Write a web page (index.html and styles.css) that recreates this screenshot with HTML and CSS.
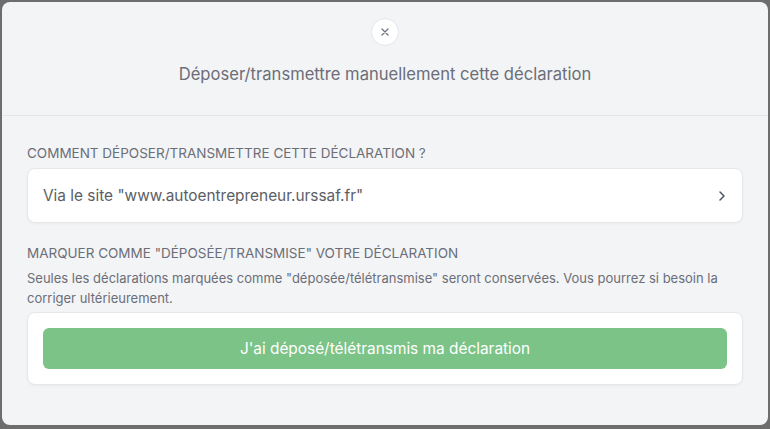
FILE: index.html
```html
<!DOCTYPE html>
<html lang="fr">
<head>
<meta charset="utf-8">
<link rel="stylesheet" href="styles.css">
</head>
<body>
<div class="modal">
  <header class="modal-head">
    <button class="close" aria-label="Fermer">
      <svg width="8" height="8" viewBox="0 0 8 8"><path d="M1 1L7 7M7 1L1 7" stroke="#6b7280" stroke-width="1.3" stroke-linecap="round"/></svg>
    </button>
    <h1 class="title">Déposer/transmettre manuellement cette déclaration</h1>
  </header>
  <section class="modal-body">
    <div class="label">COMMENT DÉPOSER/TRANSMETTRE CETTE DÉCLARATION ?</div>
    <div class="card link-card">
      <span>Via le site "www.autoentrepreneur.urssaf.fr"</span>
      <svg width="8" height="12" viewBox="0 0 8 12"><path d="M2 2L6 6L2 10" fill="none" stroke="#4b5563" stroke-width="1.5" stroke-linecap="round" stroke-linejoin="round"/></svg>
    </div>
    <div class="label second">MARQUER COMME "DÉPOSÉE/TRANSMISE" VOTRE DÉCLARATION</div>
    <p class="desc">Seules les déclarations marquées comme "déposée/télétransmise" seront conservées. Vous pourrez si besoin la corriger ultérieurement.</p>
    <div class="card btn-card">
      <button class="confirm">J'ai déposé/télétransmis ma déclaration</button>
    </div>
  </section>
</div>
</body>
</html>
```

FILE: styles.css
```css
* { box-sizing: border-box; }
html, body { margin: 0; padding: 0; }
body {
  width: 770px;
  height: 429px;
  background: #6d6d6d;
  padding: 2px 2px 4px 2px;
  font-family: Inter, "Noto Sans", sans-serif;
  overflow: hidden;
}
.modal {
  width: 766px;
  height: 423px;
  background: #f3f4f6;
  border-radius: 8px;
  display: flex;
  flex-direction: column;
}
.modal-head {
  height: 114px;
  border-bottom: 1px solid #e2e5ea;
  display: flex;
  flex-direction: column;
  align-items: center;
  padding-top: 16px;
}
.close {
  width: 28px;
  height: 28px;
  border-radius: 50%;
  background: #fff;
  border: 1px solid #e3e6ee;
  padding: 0;
  display: flex;
  align-items: center;
  justify-content: center;
}
.title {
  margin: 16px 0 0;
  font-size: 16.6px;
  line-height: 24px;
  font-weight: 400;
  color: #6b6e78;
}
.modal-body {
  padding: 27px 25px 0 25px;
  display: flex;
  flex-direction: column;
}
.label {
  font-size: 13.5px;
  line-height: 20px;
  color: #6b6e78;
  margin-bottom: 5px;
}
.label.second { margin-top: 20px; margin-bottom: 5px; }
.card {
  background: #fff;
  border: 1px solid #e5e7eb;
  border-radius: 8px;
  box-shadow: 0 1px 3px rgba(0,0,0,0.04);
}
.link-card {
  height: 55px;
  display: flex;
  align-items: center;
  justify-content: space-between;
  padding: 0 16px 0 15px;
  font-size: 15.4px;
  color: #5b5e66;
}
.desc {
  margin: 0 0 4px;
  font-size: 13px;
  line-height: 20px;
  color: #6b6e78;
}
.btn-card {
  padding: 15px 15px;
}
.confirm {
  width: 100%;
  height: 41px;
  border: 0;
  border-radius: 6px;
  background: #7bc386;
  color: #fff;
  font-family: Inter, "Noto Sans", sans-serif;
  font-size: 15.4px;
}
```
